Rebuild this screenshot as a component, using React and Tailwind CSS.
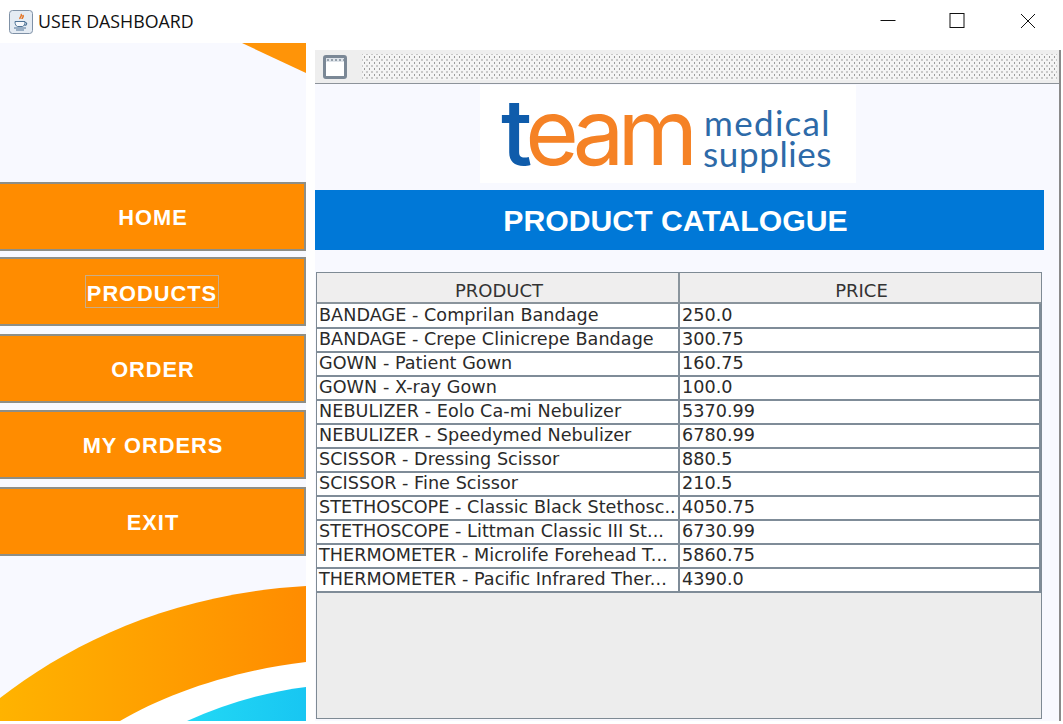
const menuItems = [
  { label: 'HOME', space: 'mt-0' },
  { label: 'PRODUCTS', space: 'mt-[6px]', focused: true },
  { label: 'ORDER', space: 'mt-[8px]' },
  { label: 'MY ORDERS', space: 'mt-[7px]' },
  { label: 'EXIT', space: 'mt-[8px]' },
];

const products = [
  ['BANDAGE - Comprilan Bandage', '250.0'],
  ['BANDAGE - Crepe Clinicrepe Bandage', '300.75'],
  ['GOWN - Patient Gown', '160.75'],
  ['GOWN - X-ray Gown', '100.0'],
  ['NEBULIZER - Eolo Ca-mi Nebulizer', '5370.99'],
  ['NEBULIZER - Speedymed Nebulizer', '6780.99'],
  ['SCISSOR - Dressing Scissor', '880.5'],
  ['SCISSOR - Fine Scissor', '210.5'],
  ['STETHOSCOPE - Classic Black Stethosc..', '4050.75'],
  ['STETHOSCOPE - Littman Classic III St...', '6730.99'],
  ['THERMOMETER - Microlife Forehead T...', '5860.75'],
  ['THERMOMETER - Pacific Infrared Ther...', '4390.0'],
];

function JavaIcon() {
  return (
    <svg width="24" height="24" viewBox="0 0 24 24" className="shrink-0">
      <rect x="0.5" y="0.5" width="23" height="23" rx="3" fill="#e4ebf3" stroke="#7f91a6" />
      <path d="M12 4c2 2-2 3-1 5M14 5c1 2-1 3-1 4" fill="none" stroke="#e2762a" strokeWidth="1.6" />
      <path d="M6 11.5h10c0 3-1 4.5-2.500 5h-5c-1.500-.5-2.500-2-2.500-5z" fill="#f6f8fb" stroke="#4f7396" />
      <path d="M16 12.500c2.500 0 2 2.500-.5 3M5 18h12M7 20h8" fill="none" stroke="#4f7396" strokeWidth="1.200" />
    </svg>
  );
}

function TitleBar() {
  return (
    <div className="flex h-[43px] items-center bg-white pl-[9px]">
      <JavaIcon />
      <span className="ml-[5px] text-[17.800px] text-[#111] font-['Open_Sans','Liberation_Sans',sans-serif]">USER DASHBOARD</span>
      <div className="ml-auto -mt-[2px] flex items-center">
        <svg width="16" height="16" viewBox="0 0 16 16" className="mr-[53px]">
          <path d="M0.500 7.500h15" stroke="#111" />
        </svg>
        <svg width="16" height="16" viewBox="0 0 16 16" className="mr-[55px]">
          <rect x="1" y="0.500" width="14" height="14" fill="none" stroke="#111" />
        </svg>
        <svg width="16" height="16" viewBox="0 0 16 16" className="mr-[27px]">
          <path d="M1 1l14 14M15 1L1 15" stroke="#111" />
        </svg>
      </div>
    </div>
  );
}

function Sidebar() {
  return (
    <div className="flex h-[678px] w-[306px] flex-col bg-[#f8f9ff]">
      <svg width="306" height="139" viewBox="0 0 306 139" className="shrink-0">
        <path d="M242 0H306V30z" fill="#ff9408" />
      </svg>
      {menuItems.map((item) => (
        <div
          key={item.label}
          className={`${item.space} ${item.focused ? '' : 'pt-[3px] pl-[2px]'} flex h-[69px] items-center justify-center border-y-2 border-r-2 border-[#8e8e86] bg-[#ff8c00] text-[21.800px] font-bold tracking-[1px] text-white font-['Liberation_Sans',sans-serif]`}
        >
          <span className={item.focused ? 'border border-[#c9ad88] px-[1px] pt-[6px] pb-[1px] leading-[24px]' : ''}>{item.label}</span>
        </div>
      ))}
      <svg width="306" height="135" viewBox="0 0 306 135" className="mt-auto shrink-0">
        <defs>
          <linearGradient id="sweep" x1="0" x2="1" y1="0" y2="0">
            <stop offset="0" stopColor="#ffb300" />
            <stop offset="1" stopColor="#ff8c00" />
          </linearGradient>
          <linearGradient id="sky" x1="0" x2="1" y1="0" y2="0">
            <stop offset="0" stopColor="#22d8f5" />
            <stop offset="1" stopColor="#18c6f2" />
          </linearGradient>
        </defs>
        <path d="M0 112C70 58 170 8 306 0V135H0z" fill="url(#sweep)" />
        <path d="M120 135C165 108 235 84 306 76V135z" fill="#fff" />
        <path d="M187 135C225 118 265 106 306 101V135z" fill="url(#sky)" />
      </svg>
    </div>
  );
}

function FrameBar() {
  return (
    <div className="flex h-[34px] items-center border-b border-[#8d939a] bg-[#eeeeee] pl-[8px] pr-[2px]">
      <div className="h-[24px] w-[24px] shrink-0 rounded-[3px] border-[3px] border-[#7b8896] bg-white">
        <div className="h-[4px] bg-[#dfe4ea] bg-[radial-gradient(circle,#7b8896_0.6px,transparent_1px)] bg-[length:4px_4px]"></div>
      </div>
      <div className="ml-[15px] h-[26px] flex-1 bg-[#f4f4f4] bg-[radial-gradient(circle,#9c9c9c_0.6px,transparent_1px),radial-gradient(circle,#9c9c9c_0.6px,transparent_1px)] bg-[length:5px_6px] bg-[position:0_0,2.500px_3px]"></div>
    </div>
  );
}

function Logo() {
  return (
    <div className="ml-[165px] mt-[1px] flex h-[98px] w-[376px] items-center bg-white pl-[21px]">
      <div className="-mt-[4px] flex h-[62px] items-center text-[92px] leading-none tracking-[-7px] font-['Inter',sans-serif]">
        <span className="font-medium text-[#0f5cab]">t</span>
        <span className="font-normal text-[#f58225]">eam</span>
      </div>
      <div className="ml-[12px] mt-[8px] flex flex-col text-[35px] leading-[31px] text-[#2d6aa8] font-['Lato',sans-serif]">
        <span className="ml-[1px] tracking-[1.300px]">medical</span>
        <span className="tracking-[0.600px]">supplies</span>
      </div>
    </div>
  );
}

function ProductTable() {
  return (
    <div className="ml-[1px] mt-[22px] h-[447px] w-[726px] border border-[#7e8a94] bg-[#ededed]">
      <div className="grid h-[31px] grid-cols-[363px_361px] bg-white text-[18px] text-[#333] font-['DejaVu_Sans',sans-serif]">
        <div className="flex items-center justify-center border-b-2 border-r-2 border-[#8a949c] bg-[#efeeee] pl-[3px] pt-[6px] leading-none">PRODUCT</div>
        <div className="flex items-center justify-center border-b-2 border-[#8a949c] bg-[#efeeee] pl-[2px] pt-[6px] leading-none">PRICE</div>
      </div>
      {products.map(([name, price]) => (
        <div key={name} className="grid h-[24px] grid-cols-[363px_361px] bg-white text-[17.600px] leading-[23px] tracking-[0.050px] text-[#2a2a2a] font-['DejaVu_Sans',sans-serif]">
          <div className="overflow-hidden whitespace-nowrap border-b-2 border-r-2 border-[#7f8c98] pl-[2px]">{name}</div>
          <div className="border-b-2 border-r-2 border-[#7f8c98] pl-[2px]">{price}</div>
        </div>
      ))}
    </div>
  );
}

function CatalogPanel() {
  return (
    <div className="ml-[9px] mt-[7px] h-[671px] w-[746px] border-r-2 border-[#8a8a8a] bg-[#f8f9ff]">
      <FrameBar />
      <Logo />
      <div className="mt-[7px] flex h-[60px] w-[729px] items-center justify-center bg-[#0078d7] pr-[8px] pt-[2px] text-[30.200px] font-bold text-white font-['Liberation_Sans',sans-serif]">
        PRODUCT CATALOGUE
      </div>
      <ProductTable />
    </div>
  );
}

export default function App() {
  return (
    <div className="h-[724px] w-[1063px] overflow-hidden bg-white">
      <TitleBar />
      <div className="flex">
        <Sidebar />
        <CatalogPanel />
      </div>
    </div>
  );
}
